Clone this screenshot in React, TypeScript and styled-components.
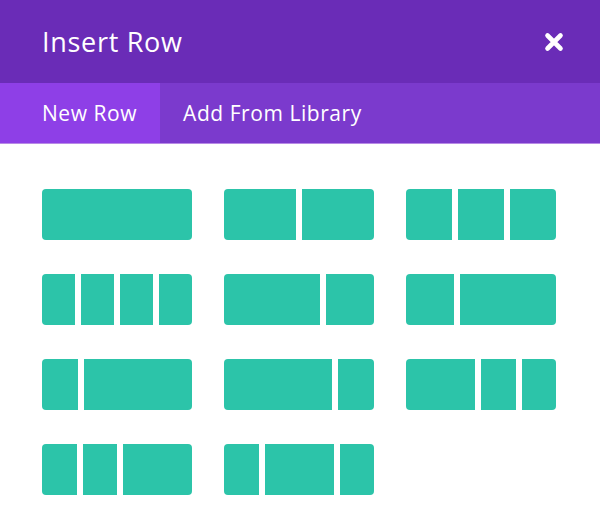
import React from 'react';
import styled, { createGlobalStyle } from 'styled-components';

const GlobalStyle = createGlobalStyle`
  html, body {
    margin: 0;
    padding: 0;
    background: #ffffff;
  }
  body {
    font-family: 'Open Sans', 'Noto Sans', sans-serif;
  }
`;

const Modal = styled.div`
  width: 600px;
  height: 521px;
  display: flex;
  flex-direction: column;
  background-color: #ffffff;
  overflow: hidden;
`;

const Header = styled.div`
  height: 83px;
  display: flex;
  align-items: center;
  justify-content: space-between;
  padding: 0 34px 0 42px;
  background-color: #6a2cb7;
  box-sizing: border-box;
`;

const Title = styled.h1`
  margin: 0;
  color: #ffffff;
  font-size: 27px;
  font-weight: 500;
  letter-spacing: 0.7px;
  line-height: 1;
`;

const CloseButton = styled.button`
  width: 24px;
  height: 24px;
  padding: 0;
  border: 0;
  background: none;
  display: flex;
  align-items: center;
  justify-content: center;
  cursor: pointer;
`;

const Tabs = styled.div`
  height: 61px;
  display: flex;
  background-color: #7b3acd;
  border-bottom: 1px solid #b88ae6;
  box-sizing: border-box;
`;

interface TabProps {
  $active?: boolean;
  $first?: boolean;
}

const Tab = styled.div<TabProps>`
  display: flex;
  align-items: center;
  padding: 0 23px 0 ${(p) => (p.$first ? '42px' : '23px')};
  background-color: ${(p) => (p.$active ? '#8e3fe7' : 'transparent')};
  color: #ffffff;
  font-size: 21px;
  font-weight: 500;
  letter-spacing: 0.55px;
  cursor: pointer;
`;

const Body = styled.div`
  flex: 1;
  padding: 45px 0 0 42px;
`;

const Grid = styled.div`
  display: grid;
  grid-template-columns: repeat(3, 150px);
  column-gap: 32px;
  row-gap: 34px;
`;

const Layout = styled.div`
  height: 51px;
  display: flex;
  gap: 6px;
  cursor: pointer;
`;

const Cell = styled.div`
  flex: ${(p: { $grow: number }) => p.$grow} 1 0;
  background-color: #2cc4a9;

  &:first-child {
    border-radius: 4px 0 0 4px;
  }
  &:last-child {
    border-radius: 0 4px 4px 0;
  }
  &:only-child {
    border-radius: 4px;
  }
`;

const layouts: number[][] = [
  [1],
  [1, 1],
  [1, 1, 1],
  [1, 1, 1, 1],
  [2, 1],
  [1, 2],
  [1, 3],
  [3, 1],
  [2, 1, 1],
  [1, 1, 2],
  [1, 2, 1],
];

const CloseIcon = () => (
  <svg width="20" height="20" viewBox="0 0 20 20">
    <path
      d="M3.5 3.5 L16.5 16.5 M16.5 3.5 L3.5 16.5"
      stroke="#ffffff"
      strokeWidth="4.6"
      strokeLinecap="round"
      fill="none"
    />
  </svg>
);

const App = () => (
  <>
    <GlobalStyle />
    <Modal>
      <Header>
        <Title>Insert Row</Title>
        <CloseButton aria-label="Close">
          <CloseIcon />
        </CloseButton>
      </Header>
      <Tabs>
        <Tab $active $first>
          New Row
        </Tab>
        <Tab>Add From Library</Tab>
      </Tabs>
      <Body>
        <Grid>
          {layouts.map((cols, i) => (
            <Layout key={i}>
              {cols.map((grow, j) => (
                <Cell key={j} $grow={grow} />
              ))}
            </Layout>
          ))}
        </Grid>
      </Body>
    </Modal>
  </>
);

export default App;
